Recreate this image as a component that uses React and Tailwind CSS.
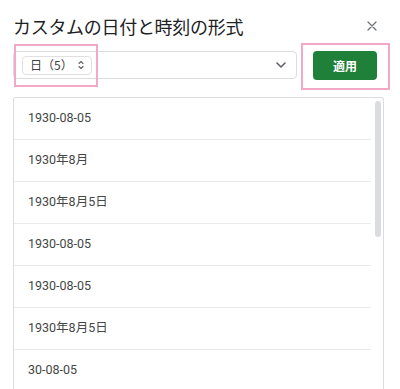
import React from "react";

const rows = [
  "1930-08-05",
  "1930年8月",
  "1930年8月5日",
  "1930-08-05",
  "1930-08-05",
  "1930年8月5日",
  "30-08-05",
];

const CloseIcon = () => (
  <svg width="10" height="10" viewBox="0 0 10 10" fill="none">
    <path d="M1 1L9 9M9 1L1 9" stroke="#6f7377" strokeWidth="1.3" strokeLinecap="round" />
  </svg>
);

const UpDown = () => (
  <svg width="6" height="10" viewBox="0 0 6 10" fill="none">
    <path d="M1 3.5L3 1.5L5 3.5M1 6.5L3 8.5L5 6.5" stroke="#5f6368" strokeWidth="1.1" strokeLinecap="round" strokeLinejoin="round" />
  </svg>
);

const ChevronDown = () => (
  <svg width="10" height="6" viewBox="0 0 10 6" fill="none">
    <path d="M1 1L5 5L9 1" stroke="#5f6368" strokeWidth="1.6" strokeLinecap="round" strokeLinejoin="round" />
  </svg>
);

const App = () => {
  return (
    <div
      className="relative w-[400px] h-[389px] overflow-hidden bg-white"
      style={{ fontFamily: 'Roboto, "Noto Sans CJK JP", sans-serif' }}
    >
      {/* title */}
      <div className="flex items-center justify-between pl-[13px] pr-[23px] pt-[14px]">
        <h1
          className="text-[18px] leading-[24px] text-[#202124] tracking-[-0.3px]"
          style={{ fontFamily: '"Noto Sans CJK JP", sans-serif' }}
        >
          カスタムの日付と時刻の形式
        </h1>
        <CloseIcon />
      </div>

      {/* controls */}
      <div className="flex items-start gap-4 pl-[13px] mt-[13px]">
        <div className="w-[284px] h-[28px] flex items-center justify-between border border-[#dadce0] rounded-[4px] pl-[8px] pr-[10px]">
          <div className="h-[19px] flex items-center border border-[#e0e0e0] rounded-[4px] pl-[7px] pr-[7px]">
            <span
              className="text-[12px] leading-none text-[#3c4043]"
              style={{ fontFamily: '"Noto Sans CJK JP", sans-serif' }}
            >
              日（5）
            </span>
            <span className="ml-[5px] flex">
              <UpDown />
            </span>
          </div>
          <ChevronDown />
        </div>
        <button
          className="w-[64px] h-[29px] rounded-[4px] bg-[#1e8039] text-white text-[12px] font-bold flex items-center justify-center"
          style={{ fontFamily: '"Noto Sans CJK JP", sans-serif' }}
        >
          適用
        </button>
      </div>

      {/* list */}
      <div className="ml-[13px] mt-[17px] w-[371px] h-[320px] flex border border-[#dadce0] rounded-t-[2px]">
        <div className="flex-1 flex flex-col">
          {rows.map((r, i) => (
            <div
              key={i}
              className="h-[42px] shrink-0 flex items-center pl-[14px] border-b border-[#e8eaed] text-[12.5px] text-[#444746]"
            >
              {r}
            </div>
          ))}
        </div>
        <div className="w-[12px] shrink-0 pt-[3px] pl-[4px]">
          <div className="w-[6px] h-[136px] rounded-full bg-[#dadce0]" />
        </div>
      </div>

      {/* highlight annotations */}
      <div className="absolute left-[14px] top-[44px] w-[84px] h-[43px] border-2 border-[#f4a7c6]" />
      <div className="absolute left-[301px] top-[43px] w-[89px] h-[47px] border-2 border-[#f4a7c6]" />
    </div>
  );
};

export default App;
